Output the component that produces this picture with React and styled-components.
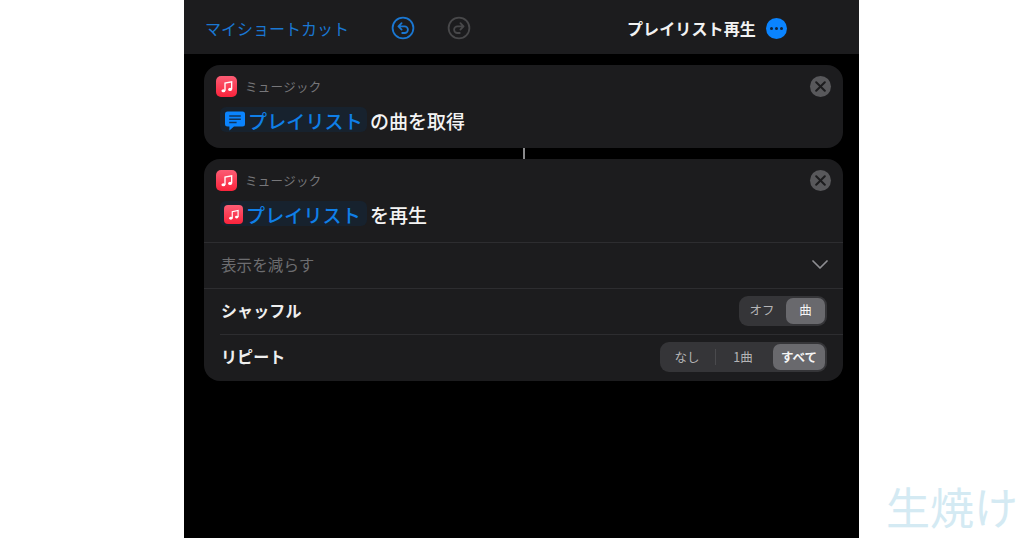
import React from 'react';
import styled, { createGlobalStyle } from 'styled-components';

const GlobalStyle = createGlobalStyle`
  html, body {
    margin: 0;
    padding: 0;
    background: #fff;
  }
  body {
    font-family: "Noto Sans CJK JP", "Noto Sans", sans-serif;
  }
`;

const Page = styled.div`
  display: flex;
  width: 1024px;
  height: 538px;
`;

const Gutter = styled.div`
  width: 184px;
`;

const Phone = styled.main`
  width: 675px;
  height: 538px;
  background: #000;
  display: flex;
  flex-direction: column;
`;

const WatermarkArea = styled.div`
  flex: 1;
  display: flex;
  align-items: flex-end;
  justify-content: flex-end;
  padding: 0 6px 6px 0;
`;

const Watermark = styled.span`
  font-size: 44px;
  line-height: 52px;
  color: #d4eaf3;
  white-space: nowrap;
`;

const TopBar = styled.header`
  height: 54px;
  flex: none;
  background: #1c1c1e;
  display: flex;
  align-items: center;
  padding: 1px 0 0 21px;
  box-sizing: border-box;
`;

const BackLink = styled.span`
  width: 186px;
  font-size: 16px;
  color: #1a77d2;
  white-space: nowrap;
`;

const HistoryIcon = styled.svg`
  width: 24px;
  height: 24px;
  margin-right: 32px;
  flex: none;
`;

const Title = styled.span`
  margin-left: 124px;
  padding-top: 1px;
  font-size: 16px;
  font-weight: 700;
  letter-spacing: 0.12px;
  color: #f2f2f2;
  white-space: nowrap;
`;

const MoreButton = styled.span`
  width: 21px;
  height: 21px;
  margin: 1px 0 0 10px;
  border-radius: 50%;
  background: #0a84ff;
  display: flex;
  align-items: center;
  justify-content: center;
  gap: 2px;
  flex: none;
`;

const MoreDot = styled.i`
  width: 3px;
  height: 3px;
  border-radius: 50%;
  background: #10243c;
`;

const Workflow = styled.section`
  display: flex;
  flex-direction: column;
  align-items: center;
  padding: 11px 16px 0 20px;
`;

const Connector = styled.div`
  width: 2px;
  height: 11px;
  background: #8a8a8c;
`;

const Card = styled.article`
  width: 100%;
  background: #1c1c1e;
  border-radius: 16px;
  overflow: hidden;
`;

const CardHead = styled.div`
  height: 83px;
  box-sizing: border-box;
  padding: 11px 12px 0;
  position: relative;
`;

const AppRow = styled.div`
  display: flex;
  align-items: center;
  gap: 8px;
  height: 21px;
`;

const AppName = styled.span`
  font-size: 12.5px;
  letter-spacing: 0.3px;
  color: #77777a;
  white-space: nowrap;
`;

const Tile = styled.span`
  width: ${p => p.$size}px;
  height: ${p => p.$size}px;
  border-radius: ${p => Math.round(p.$size / 4.4)}px;
  background: linear-gradient(180deg, #fb5c74, #fa233b);
  display: flex;
  align-items: center;
  justify-content: center;
  flex: none;
`;

const CloseButton = styled.span`
  position: absolute;
  top: 11px;
  right: 12px;
  width: 21px;
  height: 21px;
  border-radius: 50%;
  background: #58585b;
  display: flex;
  align-items: center;
  justify-content: center;
`;

const Sentence = styled.div`
  display: flex;
  align-items: center;
  margin: 10px 0 0 4px;
  height: 25px;
  gap: 3px;
`;

const Token = styled.span`
  height: 25px;
  width: 147px;
  box-sizing: border-box;
  padding: 2px 0 0 4px;
  border-radius: 6px;
  background: #17222e;
  display: flex;
  align-items: center;
  gap: ${p => p.$gap}px;
`;

const TokenLabel = styled.span`
  font-size: 19px;
  font-weight: 500;
  letter-spacing: 0.15px;
  color: #0f7fe8;
  white-space: nowrap;
`;

const Plain = styled.span`
  font-size: 19px;
  font-weight: 500;
  color: #f4f4f4;
  white-space: nowrap;
  padding-top: 1px;
`;

const Row = styled.div`
  height: ${p => p.$height}px;
  box-sizing: border-box;
  margin-left: ${p => (p.$inset ? 16 : 0)}px;
  padding: 0 ${p => p.$right}px 2px ${p => (p.$inset ? 1 : 17)}px;
  border-top: 1px solid #2d2d30;
  display: flex;
  align-items: center;
  justify-content: space-between;
`;

const CollapseLabel = styled.span`
  font-size: 15.5px;
  letter-spacing: 0.1px;
  color: #6d6d70;
  margin-bottom: 2px;
`;

const OptionLabel = styled.span`
  font-size: 16px;
  font-weight: 700;
  letter-spacing: 0.1px;
  color: #efefef;
  margin-bottom: 2px;
`;

const Segmented = styled.div`
  height: 30px;
  box-sizing: border-box;
  padding: 2px;
  border-radius: 9px;
  background: #353538;
  display: flex;
  align-items: center;
`;

const Segment = styled.span`
  width: ${p => p.$width}px;
  height: 26px;
  box-sizing: border-box;
  padding: 0 ${p => (p.$active ? 0 : 3)}px 2px 0;
  border-radius: 7px;
  background: ${p => (p.$active ? '#69696d' : 'transparent')};
  color: ${p => (p.$active ? '#f5f5f5' : '#b4b4b6')};
  font-size: 12.5px;
  font-weight: ${p => (p.$bold ? 700 : 400)};
  display: flex;
  align-items: center;
  justify-content: center;
  white-space: nowrap;
  flex: none;
`;

const SegmentRule = styled.i`
  width: 1px;
  height: 16px;
  background: #4a4a4d;
  flex: none;
`;

const NoteIcon = ({ size }) => (
  <svg width={size} height={size} viewBox="0 0 24 24" aria-hidden="true">
    <path
      d="M9 17.5V6.2l10-2v11.3"
      fill="none"
      stroke="#fff"
      strokeWidth="2"
    />
    <ellipse cx="6.6" cy="17.6" rx="2.9" ry="2.4" fill="#fff" />
    <ellipse cx="16.6" cy="15.6" rx="2.9" ry="2.4" fill="#fff" />
  </svg>
);

const UndoIcon = ({ color, flip }) => (
  <HistoryIcon viewBox="0 0 24 24" fill="none" stroke={color} strokeWidth="1.8">
    <g transform={flip ? 'matrix(-1 0 0 1 24 0)' : undefined}>
      <circle cx="12" cy="12" r="10.4" />
      <path
        d="M10.6 7.2 7.4 10.4l3.2 3.2M7.6 10.4h6a3.2 3.2 0 0 1 0 6.6h-2.4"
        strokeLinecap="round"
        strokeLinejoin="round"
      />
    </g>
  </HistoryIcon>
);

const CloseIcon = () => (
  <svg width="11" height="11" viewBox="0 0 11 11" aria-hidden="true">
    <path
      d="M1.2 1.2l8.6 8.6M9.8 1.2l-8.6 8.6"
      stroke="#1c1c1e"
      strokeWidth="2"
      strokeLinecap="round"
    />
  </svg>
);

const MessageIcon = () => (
  <svg width="22" height="22" viewBox="0 0 22 22" aria-hidden="true">
    <path
      d="M3.5 1.5h15a2.5 2.5 0 0 1 2.5 2.5v10a2.5 2.5 0 0 1-2.5 2.5H10l-4.6 4v-4H3.5A2.5 2.5 0 0 1 1 14V4a2.5 2.5 0 0 1 2.5-2.5z"
      fill="#0a84ff"
    />
    <path
      d="M5.2 6h11.6M5.2 9.2h11.6M5.2 12.4h7.4"
      stroke="#10345c"
      strokeWidth="1.5"
    />
  </svg>
);

const ChevronIcon = () => (
  <svg width="16" height="9" viewBox="0 0 16 9" aria-hidden="true">
    <path
      d="M1 1l7 7 7-7"
      fill="none"
      stroke="#8e8e92"
      strokeWidth="1.7"
      strokeLinecap="round"
      strokeLinejoin="round"
    />
  </svg>
);

const ActionHead = ({ icon, iconGap, verb }) => (
  <CardHead>
    <AppRow>
      <Tile $size={21}>
        <NoteIcon size={16} />
      </Tile>
      <AppName>ミュージック</AppName>
    </AppRow>
    <CloseButton>
      <CloseIcon />
    </CloseButton>
    <Sentence>
      <Token $gap={iconGap}>
        {icon}
        <TokenLabel>プレイリスト</TokenLabel>
      </Token>
      <Plain>{verb}</Plain>
    </Sentence>
  </CardHead>
);

const App = () => {
  return (
    <Page>
      <GlobalStyle />
      <Gutter />
      <Phone>
        <TopBar>
          <BackLink>マイショートカット</BackLink>
          <UndoIcon color="#1a77d2" />
          <UndoIcon color="#48484a" flip />
          <Title>プレイリスト再生</Title>
          <MoreButton>
            <MoreDot />
            <MoreDot />
            <MoreDot />
          </MoreButton>
        </TopBar>

        <Workflow>
          <Card>
            <ActionHead icon={<MessageIcon />} iconGap={2} verb="の曲を取得" />
          </Card>
          <Connector />
          <Card>
            <ActionHead
              icon={
                <Tile $size={19}>
                  <NoteIcon size={14} />
                </Tile>
              }
              iconGap={3}
              verb="を再生"
            />
            <Row $height={46} $right={15}>
              <CollapseLabel>表示を減らす</CollapseLabel>
              <ChevronIcon />
            </Row>
            <Row $height={46} $right={16}>
              <OptionLabel>シャッフル</OptionLabel>
              <Segmented>
                <Segment $width={45}>オフ</Segment>
                <Segment $width={39} $active>
                  曲
                </Segment>
              </Segmented>
            </Row>
            <Row $height={47} $right={16} $inset>
              <OptionLabel>リピート</OptionLabel>
              <Segmented>
                <Segment $width={53}>なし</Segment>
                <SegmentRule />
                <Segment $width={57}>1曲</Segment>
                <Segment $width={52} $active $bold>
                  すべて
                </Segment>
              </Segmented>
            </Row>
          </Card>
        </Workflow>
      </Phone>
      <WatermarkArea>
        <Watermark>生焼け</Watermark>
      </WatermarkArea>
    </Page>
  );
};

export default App;
